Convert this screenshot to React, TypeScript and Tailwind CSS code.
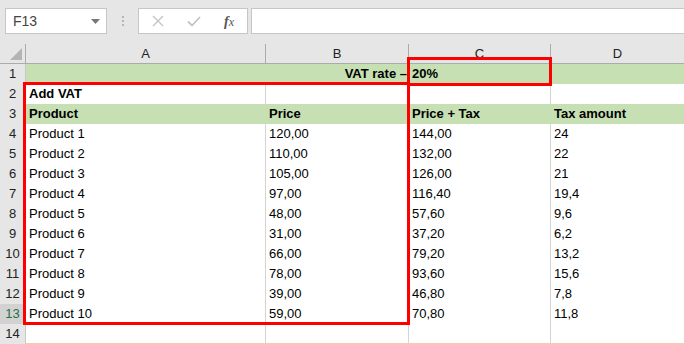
import React from "react";

const GREEN = "bg-[#c6e0b4]";

type Row = { n: number; cells: [string, string, string, string]; green?: boolean; bold?: boolean };

const rows: Row[] = [
  { n: 1, cells: ["", "VAT rate –", "20%", ""], green: true, bold: true },
  { n: 2, cells: ["Add VAT", "", "", ""], bold: true },
  { n: 3, cells: ["Product", "Price", "Price + Tax", "Tax amount"], green: true, bold: true },
  { n: 4, cells: ["Product 1", "120,00", "144,00", "24"] },
  { n: 5, cells: ["Product 2", "110,00", "132,00", "22"] },
  { n: 6, cells: ["Product 3", "105,00", "126,00", "21"] },
  { n: 7, cells: ["Product 4", "97,00", "116,40", "19,4"] },
  { n: 8, cells: ["Product 5", "48,00", "57,60", "9,6"] },
  { n: 9, cells: ["Product 6", "31,00", "37,20", "6,2"] },
  { n: 10, cells: ["Product 7", "66,00", "79,20", "13,2"] },
  { n: 11, cells: ["Product 8", "78,00", "93,60", "15,6"] },
  { n: 12, cells: ["Product 9", "39,00", "46,80", "7,8"] },
  { n: 13, cells: ["Product 10", "59,00", "70,80", "11,8"] },
  { n: 14, cells: ["", "", "", ""] },
];

const font = { fontFamily: '"Liberation Sans", Arial, sans-serif' };

function Toolbar() {
  return (
    <div className="h-[44px] bg-[#e6e6e6] flex items-start pt-[8px] pl-[5px]">
      <div className="w-[102px] h-[26px] bg-white border border-[#c6c6c6] flex items-center justify-between pl-[7px] pr-[6px]">
        <span className="text-[14px] text-[#444]">F13</span>
        <svg width="9" height="5" viewBox="0 0 9 5">
          <path d="M0 0 L9 0 L4.5 5 Z" fill="#777" />
        </svg>
      </div>
      <div className="w-[31px] h-[26px] flex flex-col items-center justify-center gap-[2px]">
        <div className="w-[2px] h-[2px] bg-[#b5b5b5]" />
        <div className="w-[2px] h-[2px] bg-[#b5b5b5]" />
        <div className="w-[2px] h-[2px] bg-[#b5b5b5]" />
      </div>
      <div className="w-[110px] h-[26px] bg-white border border-[#c6c6c6] flex items-center">
        <div className="w-[38px] flex justify-center">
          <svg width="12" height="12" viewBox="0 0 12 12">
            <path d="M1 1 L11 11 M11 1 L1 11" stroke="#c4c4c4" strokeWidth="1.4" />
          </svg>
        </div>
        <div className="w-[34px] flex justify-center">
          <svg width="14" height="11" viewBox="0 0 14 11">
            <path d="M1 5.5 L5 9.5 L13 1" stroke="#c4c4c4" strokeWidth="1.8" fill="none" />
          </svg>
        </div>
        <div className="w-[36px] flex justify-center">
          <span className="text-[14px] text-[#555] italic" style={{ fontFamily: '"Liberation Serif", serif' }}>
            <span className="font-bold">f</span><span className="text-[12px]">x</span>
          </span>
        </div>
      </div>
      <div className="ml-[3px] flex-1 h-[26px] bg-white border border-[#c6c6c6] border-r-0" />
    </div>
  );
}

function HeaderRow() {
  const letters = ["A", "B", "C", "D"];
  return (
    <div className="grid grid-cols-[26px_240px_143px_142px_1fr] h-[20px] bg-[#e6e6e6] border-b border-[#ababab]">
      <div className="relative border-r border-[#ababab]">
        <svg className="absolute left-[10px] top-[4px]" width="12" height="12" viewBox="0 0 12 12">
          <path d="M12 0 L12 12 L0 12 Z" fill="#b4b4b4" />
        </svg>
      </div>
      {letters.map((l) => (
        <div key={l} className="flex items-center justify-center text-[13px] text-[#222] border-r border-[#ababab] last:border-r-0">
          {l}
        </div>
      ))}
    </div>
  );
}

export default function App() {
  return (
    <div className="relative w-[684px] h-[344px] overflow-hidden bg-white" style={font}>
      <Toolbar />
      <HeaderRow />
      {rows.map((r) => {
        const selected = r.n === 13;
        const last = r.n === 14;
        return (
          <div key={r.n} className="grid grid-cols-[26px_240px_143px_142px_1fr] h-[20px]">
            <div
              className={`flex items-center justify-center text-[13px] border-r border-b ${
                selected
                  ? "bg-[#d2d2d2] text-[#217346] border-[#ababab]"
                  : "bg-[#e6e6e6] text-[#222] border-[#c8c8c8]"
              } ${last ? "border-b-0" : ""}`}
            >
              {r.n}
            </div>
            {r.cells.map((c, i) => {
              const right = r.n === 1 && i === 1;
              const cls = r.green
                ? `${GREEN} border-b border-[#c6e0b4]`
                : `bg-white border-b ${last ? "border-[#f8cbad]" : "border-[#d4d4d4]"} ${
                    i < 3 ? "border-r" : ""
                  }`;
              return (
                <div
                  key={i}
                  className={`flex items-center px-[3px] text-[13px] text-black whitespace-nowrap overflow-visible ${cls} ${
                    r.bold ? "font-bold" : ""
                  } ${right ? "justify-end pr-[2px]" : ""}`}
                  style={last ? { borderRightColor: "#d4d4d4" } : undefined}
                >
                  {c}
                </div>
              );
            })}
          </div>
        );
      })}
      <div className="absolute left-[23px] top-[82px] w-[387px] h-[243px] border-[3px] border-[#ff0000] pointer-events-none" />
      <div className="absolute left-[407px] top-[57px] w-[145px] h-[29px] border-[3px] border-[#ff0000] pointer-events-none" />
    </div>
  );
}
